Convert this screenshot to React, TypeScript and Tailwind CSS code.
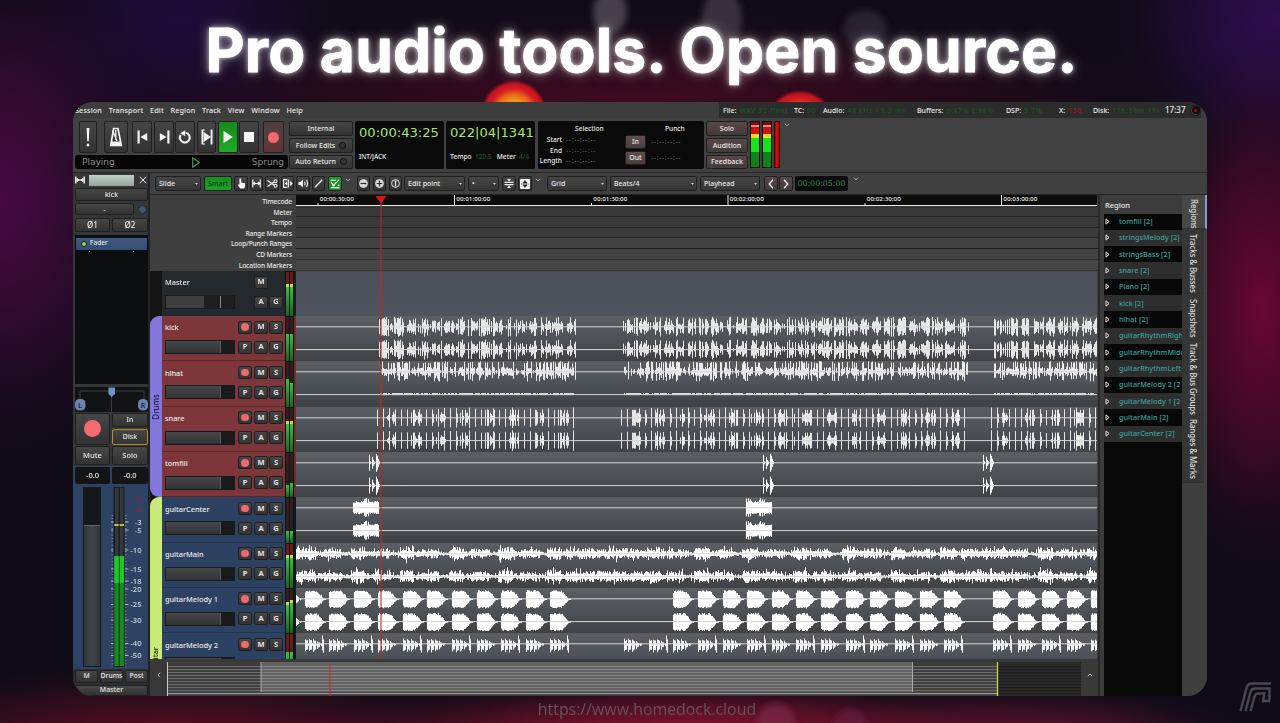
import React from "react";
import { clsx } from "clsx";
import { twMerge } from "tailwind-merge";

/* ---------- waveform generation ---------- */

const LANE_X = 296;
const LANE_W = 801;
const TOP = 10.8;
const BOTTOM = 33.6;

function rng(seed: number) {
  let s = seed;
  return () => {
    s = (s * 1664525 + 1013904223) % 4294967296;
    return s / 4294967296;
  };
}

type Seg = [number, number];
const DRUM_SEGS: Seg[] = [[379, 576], [623, 969], [993, 1097]];
const BAR = 24.55;

function bar(x: number, cy: number, up: number, down: number) {
  const px = Math.floor(x - LANE_X) + 0.5;
  return `M${px} ${(cy - up).toFixed(1)}V${(cy + down).toFixed(1)}`;
}

function kickPath(cy: number) {
  const r = rng(11);
  let d = "";
  for (const [a, b] of DRUM_SEGS) {
    for (let x = a; x < b; x += 1) {
      const v = r();
      const phase = ((x - a) % (BAR / 2)) / (BAR / 2);
      const dense = phase > 0.25 ? 0.85 : 0.4;
      const tall = v < 0.4;
      const up = tall ? 7 + r() * 3 : 1.5 + r() * 5;
      const down = tall ? 6 + r() * 4 : 1.5 + r() * 5;
      const on = r() < dense;
      if (x < a + 4 ? v < 0.5 : on) d += bar(x, cy, up, down);
    }
  }
  return d;
}

function hihatPath(cy: number) {
  const r = rng(5);
  let d = "";
  for (const [a, b] of DRUM_SEGS) {
    for (let x = a + 1; x < b; x += 1) {
      const tall = r() < 0.38;
      const up = tall ? 8 + r() * 2.4 : 1 + r() * 4;
      const down = tall ? 3 + r() * 7 : 1 + r() * 3.5;
      if (r() < 0.85) d += bar(x, cy, up, down);
    }
  }
  return d;
}

function hihatLow(cy: number) {
  const r = rng(9);
  let d = "";
  for (const [a, b] of DRUM_SEGS) {
    for (let x = a + 1; x < b; x += 1) if (r() < 0.75) d += bar(x, cy, 1.5, 0.5);
  }
  return d;
}

function snarePath(cy: number) {
  const r = rng(23);
  let d = "";
  for (const [a, b] of DRUM_SEGS) {
    for (let x = a - 2; x < b; x += BAR / 4) {
      const h = 7.5 + r() * 3;
      d += bar(x, cy, h, h);
      if (r() < 0.3) d += bar(x + 1.2, cy, 4, 5);
    }
    for (let x = a + 8; x < b; x += BAR) {
      for (let k = 0; k < 10; k++) {
        const h = r() < 0.2 ? 8 : 1.5 + r() * 4.5;
        if (x + k < b && r() < 0.8) d += bar(x + k, cy, h, h);
      }
    }
  }
  return d;
}

function tomPath(cy: number) {
  let d = "";
  for (const x of [369, 763, 983]) {
    const hits: [number, number][] = [[0, 8], [1, 1.5], [3, 6], [4, 3], [5, 1.5], [7, 9], [8, 7], [9, 4], [10, 1.5]];
    for (const [dx, h] of hits) d += bar(x + dx, cy, h, h);
  }
  return d;
}

function centerPath(cy: number) {
  const r = rng(31);
  let d = "";
  for (const x0 of [353, 746]) {
    for (let x = x0; x < x0 + 26; x += 1) {
      const spike = r() < 0.18 ? 3 : 0;
      d += bar(x, cy, 5 + r() * 2 + spike, 4.5 + r() * 2 + spike);
    }
  }
  return d;
}

function mainPath(cy: number, seed: number) {
  const r = rng(seed);
  let d = "";
  for (let x = LANE_X; x < LANE_X + LANE_W; x += 1) {
    const p = ((x - 301) % (BAR * 2)) / (BAR * 2);
    const busy = (x > 565 && x < 650) || (x > 960 && x < 1010);
    const swell = p < 0.3 ? 6 : p < 0.45 ? 3 : p < 0.8 ? 4.6 : 2;
    const env = busy ? 5 : swell;
    const spike = r() < 0.12 ? 2.5 : 0;
    d += bar(x, cy, env * (0.35 + r() * 0.85) + spike, env * (0.35 + r() * 0.75) + spike * r() * 1.3);
  }
  return d;
}

const melodyStarts: number[] = [
  ...Array.from({ length: 11 }, (_, i) => 305.2 + i * BAR),
  ...Array.from({ length: 12 }, (_, i) => 673.8 + i * 24.62),
  ...Array.from({ length: 5 }, (_, i) => 993.7 + i * 24.5),
];

function melodyOne(cy: number, seed: number) {
  const r = rng(seed);
  let d = bar(296.5, cy, 4, 4) + bar(297.5, cy, 3, 3) + bar(298.5, cy, 2, 2) + bar(300, cy, 1, 1);
  for (const s of melodyStarts) {
    for (let t = 0; t < 21; t += 1) {
      const env = t < 1 ? 6.5 : t < 11 ? 7.6 : t < 19 ? 7.6 * (1 - (t - 11) / 8.5) : 0.8;
      const j = t < 17 ? r() * 2 : 0;
      if (s + t < 1097) d += bar(s + t, cy, env + j - 0.4, env + j * 0.8);
    }
  }
  return d;
}

function melodyTwo(cy: number) {
  const r = rng(77);
  let d = "";
  const starts = [...melodyStarts, 624.6, 649.2];
  starts.forEach((s) => {
    const accent = Math.round((s - 305) / BAR) % 2 === 0;
    for (let t = 0; t < 18; t += 1) {
      const env = Math.max(1.2, 6.6 - (t > 9 ? (t - 9) * 0.75 : 0));
      const m = t % 4;
      const k = m === 3 ? 0.2 : m === 0 ? 1 : 0.75;
      if (s + t < 1097) d += bar(s + t, cy, env * k * (0.7 + r() * 0.2), env * k * (1 + r() * 0.25));
    }
    if (accent && s + 18 < 1097) {
      d += bar(s + 17, cy, 9, 6) + bar(s + 18, cy, 5, 8.5);
    }
  });
  return d;
}

type Wave = { d: string; w: number };
const WAVES: Record<string, Wave> = {
  kick: { d: kickPath(TOP) + kickPath(BOTTOM), w: 0.86 },
  hihat: { d: hihatPath(TOP - 0.2) + hihatLow(BOTTOM), w: 0.88 },
  snare: { d: snarePath(TOP) + snarePath(BOTTOM), w: 0.85 },
  tomfill: { d: tomPath(TOP) + tomPath(BOTTOM), w: 1 },
  guitarCenter: { d: centerPath(TOP) + centerPath(BOTTOM), w: 1.1 },
  guitarMain: { d: mainPath(TOP, 3) + mainPath(BOTTOM, 8), w: 1.05 },
  "guitarMelody 1": { d: melodyOne(TOP + 0.4, 14) + melodyOne(BOTTOM + 0.4, 19), w: 1.1 },
  "guitarMelody 2": { d: melodyTwo(TOP + 0.6), w: 0.95 },
};

/* ---------- shared pieces ---------- */

const BTN = "flex shrink-0 items-center justify-center rounded-[2px] border border-[#1f1f1f] bg-linear-to-b from-[#464646] to-[#333333]";

function Btn({ className, children }: { className?: string; children?: React.ReactNode }) {
  return <div className={twMerge(BTN, className)}>{children}</div>;
}

function Chevron({ className }: { className?: string }) {
  return (
    <svg className={clsx("shrink-0", className)} width="6" height="4" viewBox="0 0 6 4">
      <path d="M0.8 0.8L3 2.8L5.2 0.8" fill="none" stroke="#b5b5b5" strokeWidth="0.9" />
    </svg>
  );
}

function Select({ label, className }: { label: string; className?: string }) {
  return (
    <div className={clsx("flex h-[15px] shrink-0 items-center justify-between rounded-[2px] border border-[#1f1f1f] bg-linear-to-b from-[#464646] to-[#353535] pl-[3px] pr-[2px] whitespace-nowrap", className)}>
      <span>{label}</span>
      <svg width="3" height="2" viewBox="0 0 3 2"><path d="M0 0H3L1.5 2Z" fill="#ccc" /></svg>
    </div>
  );
}

/* ---------- menu + status ---------- */

function Stat({ label, value, className, red }: { label: string; value: string; className: string; red?: boolean }) {
  return (
    <div className={clsx("flex shrink-0 gap-[3px] whitespace-nowrap", className)}>
      <span>{label}</span>
      <span className={clsx("tracking-[0.55px]", red ? "text-[#a81624]" : "text-[#1b5a1f]")}>{value}</span>
    </div>
  );
}

function MenuBar() {
  return (
    <div className="flex h-4 items-center justify-between bg-[#3d3d3d]">
      <div className="flex h-full items-center gap-[6.7px] pt-px pl-[2px] text-[7.2px] tracking-[0.15px]">
        {["Session", "Transport", "Edit", "Region", "Track", "View", "Window", "Help"].map((m) => (
          <span key={m}>{m}</span>
        ))}
      </div>
      <div className="mr-[6px] flex h-full items-center bg-[#2c2c2c] pl-1">
        <Stat label="File:" value="WAV 32-float" className="w-[71px]" />
        <Stat label="TC:" value="30" className="w-[29px]" />
        <Stat label="Audio:" value="48 kHz /  5.3 ms" className="w-[94px]" />
        <Stat label="Buffers:" value="p:47% c:98%" className="w-[89px]" />
        <Stat label="DSP:" value=" 5.7%" className="w-[53px]" />
        <Stat label="X:" value="150" red className="w-[34px]" />
        <Stat label="Disk:" value="11h:58m:15s" className="w-[72px]" />
        <span className="w-[25px] text-[8px]">17:37</span>
        <div className="flex size-[11px] items-center justify-center rounded-full border border-[#1c1c1c] bg-[#4a3a3e]">
          <div className="flex size-[8px] items-center justify-center rounded-full bg-[#150a0c]"><div className="size-[3px] rounded-full bg-[#a01024]" /></div>
        </div>
      </div>
    </div>
  );
}

/* ---------- transport ---------- */

const W = "#f4f4f4";

function Transport() {
  return (
    <div className="flex h-[54px] items-start bg-[#414141] pl-[2px] pt-[3px]">
      <div className="flex w-[213px] shrink-0 flex-col">
        <div className="flex h-[32px]">
          <Btn className="ml-[4px] h-[32px] w-[18px]">
            <svg width="6" height="20" viewBox="0 0 6 20"><path d="M1.6 1H4.4L3.8 14H2.2Z" fill={W} /><circle cx="3" cy="18" r="1.4" fill={W} /></svg>
          </Btn>
          <Btn className="ml-[7px] h-[32px] w-[24px]">
            <svg width="14" height="20" viewBox="0 0 14 20" fill="none" stroke={W}>
              <path d="M4.6 1.5H9L12.3 18.5H1.7Z" strokeWidth="1.7" /><path d="M2.5 14.5H11.5V18H2.5Z" fill={W} stroke="none" /><path d="M8 14L3.6 3.4M6.8 3V13" strokeWidth="1.3" />
            </svg>
          </Btn>
          <Btn className="ml-[4px] h-[32px] w-[20px]">
            <svg width="11" height="14" viewBox="0 0 11 14"><path d="M0.5 0.5H2.7V13.5H0.5ZM10.2 3V11L3.4 7Z" fill={W} /></svg>
          </Btn>
          <Btn className="ml-[2px] h-[32px] w-[20px]">
            <svg width="11" height="14" viewBox="0 0 11 14"><path d="M8.3 0.5H10.5V13.5H8.3ZM0.8 3V11L7.6 7Z" fill={W} /></svg>
          </Btn>
          <Btn className="ml-[1px] h-[32px] w-[20px]">
            <svg width="14" height="14" viewBox="0 0 14 14"><path d="M2.600 5A4.900 4.900 0 1 0 7.600 2.700" fill="none" stroke={W} strokeWidth="2.1" /><path d="M2.200 3.300L7.200 0.200V6.200Z" fill={W} /></svg>
          </Btn>
          <Btn className="ml-[2px] h-[32px] w-[19px]">
            <svg width="12" height="16" viewBox="0 0 12 16"><path d="M0.5 0.5H2.2V15.500H0.5ZM9.6 0.5H11.5V15.500H9.6ZM2.6 2.800L9.8 8L2.6 13.200Z" fill={W} /><path d="M2 1H4M2 15H4" stroke={W} strokeWidth="1" /></svg>
          </Btn>
          <Btn className="ml-[2px] h-[32px] w-[20px] from-[#158a1a] to-[#1faa27]">
            <svg width="10" height="14" viewBox="0 0 10 14"><path d="M0.5 0.8L9.7 7L0.5 13.2Z" fill={W} /></svg>
          </Btn>
          <Btn className="ml-[1px] h-[32px] w-[20px]"><div className="size-[10px] bg-[#f4f4f4]" /></Btn>
          <Btn className="ml-[4px] h-[32px] w-[21px] from-[#4d4041] to-[#633538]"><div className="size-[11px] rounded-full bg-[#f5686d]" /></Btn>
        </div>
        <div className='mt-[2px] flex h-[14px] items-center justify-between rounded-[3px] bg-[#060606] pt-px px-[7px] font-["DejaVu_Sans",sans-serif] text-[9px] text-[#8a8a8a]'>
          <span>Playing</span>
          <svg className="ml-[25px]" width="8" height="11" viewBox="0 0 8 11"><path d="M0.7 0.8L7.2 5.5L0.7 10.2Z" fill="none" stroke="#3e9a57" strokeWidth="1.2" /></svg>
          <span className="-mr-[3px]">Sprung</span>
        </div>
      </div>
      <div className="ml-[1px] flex w-[64px] shrink-0 flex-col gap-[2px]">
        <Btn className="h-[15px]">Internal</Btn>
        <Btn className="h-[14.5px] gap-[4px] whitespace-nowrap"><span>Follow Edits</span><Led /></Btn>
        <Btn className="h-[14.5px] gap-[4px] whitespace-nowrap"><span>Auto Return</span><Led /></Btn>
      </div>
      <div className="ml-[2px] flex h-[48px] w-[89px] shrink-0 flex-col rounded-[2px] bg-[#0a0a0a] px-[4px]">
        <span className='mt-[3px] h-[18px] font-["DejaVu_Sans",sans-serif] text-[13.1px] leading-[18px] text-[#a5e86c]'>00:00:43:25</span>
        <span className="mt-[10px] text-[6.5px] leading-[9px] tracking-[-0.1px]">INT/JACK</span>
      </div>
      <div className="ml-[2px] flex h-[48px] w-[89px] shrink-0 flex-col rounded-[2px] bg-[#0a0a0a] pl-[4px]">
        <span className='mt-[3px] h-[18px] font-["DejaVu_Sans",sans-serif] text-[13.1px] leading-[18px] text-[#a5e86c]'>022|04|1341</span>
        <div className="mt-[10px] flex gap-[3px] text-[6.7px] leading-[9px] whitespace-nowrap">
          <span>Tempo</span><span className="w-[19px] text-[#1e5536]">120.5</span><span>Meter</span><span className="text-[#1e5536]">4/4</span>
        </div>
      </div>
      <div className="ml-[3px] flex h-[48px] w-[166px] shrink-0 rounded-[2px] bg-[#0a0a0a] text-[6.6px]">
        <div className="grid w-[83px] grid-cols-[24px_1fr] grid-rows-[14px_10.5px_10.5px_11px] gap-x-[4px] leading-[10px]">
          <span className="col-span-2 pl-[37px] leading-[15px]">Selection</span>
          <span className="text-right">Start</span><Dashes />
          <span className="text-right">End</span><Dashes />
          <span className="text-right">Length</span><Dashes />
        </div>
        <div className="ml-[4px] flex w-[22px] flex-col gap-[2px] pt-[13.5px] text-[7px]">
          <Btn className="h-[14px] w-[21px] from-[#604e4e] to-[#4b3d3e]">In</Btn>
          <Btn className="h-[14px] w-[21px] from-[#604e4e] to-[#4b3d3e]">Out</Btn>
        </div>
        <div className="ml-[4px] flex flex-col">
          <span className="pl-[14px] leading-[15px]">Punch</span>
          <span className="leading-[12px]"><Dashes /></span>
          <span className="mt-[4px] leading-[12px]"><Dashes /></span>
        </div>
      </div>
      <div className="ml-[2px] flex w-[42px] shrink-0 flex-col gap-[2px]">
        <Btn className="h-[15px] from-[#584848] to-[#443a3a]">Solo</Btn>
        <Btn className="h-[14.5px] from-[#584848] to-[#443a3a]">Audition</Btn>
        <Btn className="h-[14.5px] from-[#584848] to-[#443a3a]">Feedback</Btn>
      </div>
      <div className="ml-[2px] flex h-[47px] gap-[1.5px]">
        <MasterMeter /><MasterMeter />
        <div className="ml-[1px] w-[6px] border border-[#3a0505] bg-linear-to-r from-[#8c0808] via-[#e31212] to-[#8c0808]" />
      </div>
      <Chevron className="ml-[4px] mt-[2px]" />
    </div>
  );
}

function Led() {
  return <div className="size-[7px] rounded-full border-[1.5px] border-[#0c0c0c] bg-[#363636]" />;
}

function Dashes() {
  return <span className="tracking-[0.7px] text-[#5a6a5e]">--:--:--:--</span>;
}

function MasterMeter() {
  return (
    <div className="flex h-full w-[10px] flex-col border border-[#101010]">
      <div className="h-[3px] bg-[#7a0c0c]" />
      <div className="h-[2px] bg-[#e08a8a]" />
      <div className="h-[7px] bg-[#cf1111]" />
      <div className="h-[4px] bg-[#eedb20]" />
      <div className="h-[14px] bg-[#15e51b]" />
      <div className="flex-1 bg-[#11801b]" />
    </div>
  );
}

/* ---------- tool row ---------- */

function ToolRow() {
  const s = { fill: "none", stroke: W, strokeWidth: 1.1 };
  return (
    <div className="flex h-[22px] items-start border-t border-[#262626] bg-[#404040] pt-[3px] pl-[5px]">
      <Select label="Slide" className="w-[46px]" />
      <Btn className="ml-[3px] h-[15px] w-[28px] from-[#1a8f22] to-[#1aa026] text-[#0a3f0d]">Smart</Btn>
      <Btn className="ml-[2px] h-[15px] w-[14px]">
        <svg width="9" height="11" viewBox="0 0 9 11"><path d="M2.4 0.5H4.2V4.4L8 5.2V9L7 10.6H3.2L0.6 6.8L2.4 6.6Z" fill={W} /></svg>
      </Btn>
      <Btn className="ml-[2px] h-[15px] w-[13px]">
        <svg width="9" height="9" viewBox="0 0 9 9"><path d="M0.7 0.5V8.5M8.3 0.5V8.5M1 4.5H8M3 2.8L1.4 4.5L3 6.2M6 2.8L7.6 4.5L6 6.2" {...s} /></svg>
      </Btn>
      <Btn className="ml-[2px] h-[15px] w-[14px]">
        <svg width="11" height="9" viewBox="0 0 11 9"><path d="M0.5 1.5L7 6M0.5 7.5L7 3" {...s} strokeWidth="1.4" /><circle cx="8.5" cy="2.2" r="1.5" {...s} /><circle cx="8.5" cy="6.8" r="1.5" {...s} /></svg>
      </Btn>
      <Btn className="ml-[2px] h-[15px] w-[13px]">
        <svg width="10" height="9" viewBox="0 0 10 9"><path d="M4.4 0.6H0.6V8.4H4.4" {...s} /><path d="M1.8 4.5L4.2 2.2V6.8ZM4.8 0.5H6V8.5H4.8ZM7 1.8L9.8 4.5L7 7.2Z" fill={W} /></svg>
      </Btn>
      <Btn className="ml-[2px] h-[15px] w-[14px]">
        <svg width="11" height="9" viewBox="0 0 11 9"><path d="M0.5 3H2.4L5 0.6V8.4L2.4 6H0.5Z" fill={W} /><path d="M6.5 2.6Q7.6 4.5 6.5 6.4M8.5 1Q10.6 4.5 8.5 8" {...s} /></svg>
      </Btn>
      <Btn className="ml-[2px] h-[15px] w-[13px]">
        <svg width="9" height="9" viewBox="0 0 9 9"><path d="M0.800 8.400L2 6.200L3 7.100Z" fill={W} stroke={W} strokeWidth="0.6" /><path d="M2.400 6.700L8.300 0.700" stroke={W} strokeWidth="1.3" /></svg>
      </Btn>
      <Btn className="ml-[3px] h-[15px] w-[14px] from-[#1d9a28] to-[#1a8b24]">
        <svg width="10" height="10" viewBox="0 0 10 10"><path d="M0.5 1.2H6M0.7 8.6H9.3M1 3L3.4 6.4L9 0.8" {...s} /><circle cx="3.4" cy="6.4" r="1.2" fill={W} /><circle cx="8.6" cy="6.3" r="0.9" fill={W} /></svg>
      </Btn>
      <Chevron className="ml-[3px] mt-[2px]" />
      {[0, 1, 2].map((i) => (
        <Btn key={i} className={i === 0 ? "ml-[6px] h-[15px] w-[13px]" : "ml-[3px] h-[15px] w-[13px]"}>
          <svg width="9" height="9" viewBox="0 0 9 9">
            <circle cx="4.5" cy="4.5" r="3.9" fill={i === 2 ? "none" : "#d9d9d9"} stroke="#d9d9d9" />
            <path d={i === 0 ? "M1.6 4.5H7.4" : i === 1 ? "M1.8 4.5H7.2M4.5 1.8V7.2" : "M4.5 2V7M3.6 2.2H5.4M3.6 6.8H5.4"} stroke={i === 2 ? "#e5e5e5" : "#2c2c2c"} strokeWidth="1.2" />
          </svg>
        </Btn>
      ))}
      <Select label="Edit point" className="ml-[2px] w-[61px]" />
      <Select label="•" className="ml-[3px] w-[31px]" />
      <Btn className="ml-[3px] h-[15px] w-[14px]">
        <svg width="10" height="11" viewBox="0 0 10 11"><path d="M0.5 4.4H9.5M0.5 6.6H9.5" {...s} /><path d="M3 1L5 3.4L7 1ZM3 10L5 7.6L7 10Z" fill={W} /></svg>
      </Btn>
      <Btn className="ml-[2px] h-[15px] w-[14px]">
        <svg width="10" height="10" viewBox="0 0 10 10"><rect width="10" height="10" rx="1" fill={W} /><path d="M1 5H9M3 4L5 1.4L7 4ZM3 6L5 8.6L7 6Z" fill="#222" stroke="#222" strokeWidth="0.6" /></svg>
      </Btn>
      <Chevron className="ml-[3px] mt-[2px]" />
      <Select label="Grid" className="ml-[6px] w-[60px]" />
      <Select label="Beats/4" className="ml-[3px] w-[87px]" />
      <Select label="Playhead" className="ml-[3px] w-[60px]" />
      <Btn className="ml-[4px] h-[15px] w-[14px] from-[#584848] to-[#443a3a]">
        <svg width="6" height="10" viewBox="0 0 6 10"><path d="M5 0.8L1.2 5L5 9.2" {...s} strokeWidth="1.3" /></svg>
      </Btn>
      <Btn className="ml-[1px] h-[15px] w-[14px] from-[#584848] to-[#443a3a]">
        <svg width="6" height="10" viewBox="0 0 6 10"><path d="M1 0.8L4.8 5L1 9.2" {...s} strokeWidth="1.3" /></svg>
      </Btn>
      <div className='ml-[2px] flex h-[15px] w-[53px] items-center justify-center rounded-[2px] bg-[#0b0b0b] font-["DejaVu_Sans",sans-serif] text-[7.9px] text-[#2f8a45]'>00:00:05:00</div>
      <Chevron className="ml-[5px] mt-[1px]" />
    </div>
  );
}

/* ---------- mixer strip ---------- */

function MeterScale() {
  const marks: [string, number, boolean][] = [
    ["+3", 500, true], ["+0", 511, true], ["-3", 523, false], ["-5", 531, false], ["-10", 551, false], ["-15", 570, false],
    ["-18", 582, false], ["-20", 590, false], ["-25", 605.5, false], ["-30", 621, false], ["-40", 644.5, false], ["-50", 656.5, false],
  ];
  return (
    <svg className="ml-[7px] shrink-0" width="40" height="182" viewBox="0 0 40 182" fontFamily='"Noto Sans", sans-serif' fontSize="7.6">
      <rect x="5.5" y="0" width="11" height="180" fill="#17191b" />
      <rect x="7" y="1" width="3.6" height="178" fill="#33383a" />
      <rect x="11.8" y="1" width="3.6" height="178" fill="#33383a" />
      <rect x="6.3" y="69" width="4.4" height="110" fill="#168a20" />
      <rect x="11.6" y="69" width="4.4" height="110" fill="#168a20" />
      <rect x="6.3" y="69" width="4.4" height="27" fill="#22c52c" />
      <rect x="11.6" y="69" width="4.4" height="27" fill="#22c52c" />
      <path d="M6.3 38H10.7M11.6 38H16" stroke="#f0e838" strokeWidth="1.4" />
      <path d="M4.3 28V180M17.8 28V180" stroke="#aab4c2" strokeWidth="1.6" strokeDasharray="0.7 2.6" opacity="0.7" />
      {marks.map(([t, y, red]) => (
        <g key={t}>
          {!red && <path d={`M3 ${y - 488}H5.500M17 ${y - 488}H20.500`} stroke="#d0d6dd" strokeWidth="0.8" />}
          <text x="33.5" y={y - 488 + 2.7} textAnchor="end" fill={red ? "#8e2634" : "#d5dae0"}>{t}</text>
        </g>
      ))}
    </svg>
  );
}

function MixerStrip() {
  return (
    <div className="flex w-[77px] shrink-0 flex-col border-r-2 border-t border-r-[#232323] border-t-[#262626] bg-[#343638] pl-[2px]">
      <div className="flex h-[15px] items-center">
        <svg width="10" height="8" viewBox="0 0 10 8"><path d="M0.8 0.5V7.5M9.2 0.5V7.5" stroke={W} strokeWidth="1.4" /><path d="M4.6 4L1.6 1.6V6.4ZM5.4 4L8.4 1.6V6.4Z" fill={W} /><path d="M2 4H8" stroke={W} /></svg>
        <div className="ml-[4px] h-[11px] w-[45px] bg-linear-to-b from-[#bed0c8] to-[#93a59d]" />
        <svg className="ml-[5px]" width="8" height="8" viewBox="0 0 8 8"><path d="M0.8 0.8L7.2 7.2M7.2 0.8L0.8 7.2" stroke="#e8e8e8" strokeWidth="1" /></svg>
      </div>
      <Btn className="h-[13px] w-[73px]">kick</Btn>
      <div className="mt-[2px] flex h-[13px] items-center">
        <Btn className="h-[12px] w-[59px]">-</Btn>
        <div className="ml-[4px] size-[9px] rounded-full border border-[#20262e] bg-[#45566f]" />
      </div>
      <div className="mt-[2px] flex gap-[2px] text-[8px]">
        <Btn className="h-[14px] w-[35px]">Ø1</Btn>
        <Btn className="h-[14px] w-[36px]">Ø2</Btn>
      </div>
      <div className="mt-[3px] h-[152px] w-[73px] bg-[#0d0e0f] pt-[3px]">
        <div className="mx-px flex h-[12px] items-center gap-[3px] rounded-[1px] bg-linear-to-b from-[#41597c] to-[#344d76] pl-[5px] text-[6.500px]">
          <div className="size-[6px] rounded-full border-[1.5px] border-[#14200f] bg-[#9fd464]" />
          <span>Fader</span>
        </div>
        <div className="mt-px flex justify-between px-[14px]"><i className="size-[1px] bg-[#ccc]" /><i className="size-[1px] bg-[#ccc]" /></div>
      </div>
      <svg className="mt-[2.5px] shrink-0" width="73" height="26" viewBox="0 0 73 26" fontFamily='"Noto Sans", sans-serif' fontSize="7.5">
        <rect width="73" height="25" fill="#111315" />
        <path d="M5 13V4H36M69 13V4H37" fill="none" stroke="#3a3f45" />
        <path d="M36.5 4V25" stroke="#333a42" />
        <path d="M33.5 0.500H40V7L36.700 10L33.500 7Z" fill="#6f93bd" />
        <rect x="0" y="12" width="10.5" height="11.500" rx="4.500" fill="#6c84ad" /><rect x="63" y="12" width="10" height="11.500" rx="4.500" fill="#6c84ad" />
        <text x="3" y="20.6" fill="#15203a">L</text><text x="65.6" y="20.6" fill="#15203a">R</text>
      </svg>
      <div className="flex gap-[2px]">
        <Btn className="h-[32px] w-[35px]"><div className="size-[17px] rounded-full bg-[#f46b70]" /></Btn>
        <div className="flex flex-col gap-[2px]">
          <Btn className="h-[14px] w-[36px]">In</Btn>
          <Btn className="h-[16px] w-[36px] border-[#b98925]">Disk</Btn>
        </div>
      </div>
      <div className="mt-[1px] flex gap-[2px]">
        <Btn className="h-[19px] w-[35px] text-[7.5px]">Mute</Btn>
        <Btn className="h-[19px] w-[36px] text-[7.5px]">Solo</Btn>
      </div>
      <div className="-ml-[2px] mt-[1px] flex flex-1 flex-col bg-[#2e4263] pl-[2px]">
        <div className="mt-[1px] flex gap-[2px] text-[7.5px]">
          <div className="flex h-[17px] w-[35px] items-center justify-center rounded-[2px] bg-[#121416]">-0.0</div>
          <div className="flex h-[17px] w-[36px] items-center justify-center rounded-[2px] bg-[#121416]">-0.0</div>
        </div>
        <div className="mt-[3px] flex h-[182px] shrink-0">
          <div className="ml-[8px] flex h-[180px] w-[18px] shrink-0 flex-col border border-[#15181c] bg-[#15181a]">
            <div className="h-[37px]" />
            <div className="flex-1 border-t border-[#666] bg-linear-to-r from-[#30363a] via-[#3f4548] to-[#30363a]" />
          </div>
          <MeterScale />
        </div>
        <div className="-ml-[2px] flex flex-1 flex-col bg-[#2c2f33] pl-[2px]">
          <div className="mt-[1px] flex gap-[2px] text-[6.8px]">
            <Btn className="h-[13px] w-[23px]">M</Btn><Btn className="h-[13px] w-[23px]">Drums</Btn><Btn className="h-[13px] w-[23px]">Post</Btn>
          </div>
          <Btn className="mt-[2px] h-[11px] w-[73px] pb-px">Master</Btn>
        </div>
      </div>
    </div>
  );
}

/* ---------- rulers ---------- */

const MARKS: [string, number, boolean][] = [
  ["00:00:30:00", 318, false], ["00:01:00:00", 454.5, true], ["00:01:30:00", 591.5, false],
  ["00:02:00:00", 728, true], ["00:02:30:00", 865, false], ["00:03:00:00", 1001.5, true],
];

function Rulers() {
  const names = ["Timecode", "Meter", "Tempo", "Range Markers", "Loop/Punch Ranges", "CD Markers", "Location Markers"];
  return (
    <div className="flex h-[76px] shrink-0">
      <div className="flex w-[146px] shrink-0 flex-col bg-[#3f3f3f] pr-[4px] text-right text-[6.6px] tracking-[-0.1px]">
        {names.map((n) => <span key={n} className="h-[10.6px] leading-[13px]">{n}</span>)}
      </div>
      <div className="flex flex-1 flex-col">
        <svg className="shrink-0" width="801" height="11" viewBox="0 0 801 11" fontFamily='"Noto Sans", sans-serif' fontSize="5.9">
          <rect width="801" height="11" fill="#0d0d0d" />
          <path d="M0 10.5H801" stroke="#eee" />
          {MARKS.map(([t, x, tall]) => (
            <g key={t}>
              <path d={`M${x - 296} ${tall ? 0 : 8}V11`} stroke="#eee" />
              <text x={x - 294.2} y="6.2" fill="#eaeaea" textLength="34" lengthAdjust="spacingAndGlyphs">{t}</text>
            </g>
          ))}
        </svg>
        <div className="h-[11px] border-b border-[#222] bg-[#373737]" />
        <div className="h-[11px] border-b border-[#222] bg-[#393939]" />
        <div className="h-[10px] border-b border-[#222] bg-[#3b3b3b]" />
        <div className="h-[11px] border-b border-[#1c1c1c] bg-[#424242]" />
        <div className="h-[11px] border-b border-[#303030] bg-[#444444]" />
        <div className="h-[11px] border-b border-[#303030] bg-[#464646]" />
      </div>
    </div>
  );
}

/* ---------- tracks ---------- */

type Track = { name: string; kind: "drum" | "guitar"; levels: [number, number]; yellow?: boolean; hot?: boolean; partial?: boolean };
const TRACKS: Track[] = [
  { name: "kick", kind: "drum", levels: [27, 27] },
  { name: "hihat", kind: "drum", levels: [28, 24] },
  { name: "snare", kind: "drum", levels: [28, 28], yellow: true },
  { name: "tomfill", kind: "drum", levels: [12, 14] },
  { name: "guitarCenter", kind: "guitar", levels: [12, 12] },
  { name: "guitarMain", kind: "guitar", levels: [30, 30], yellow: true, hot: true },
  { name: "guitarMelody 1", kind: "guitar", levels: [28, 30], yellow: true },
  { name: "guitarMelody 2", kind: "guitar", levels: [27, 27], hot: true, partial: true },
];

const SMALL = "h-[13px] w-[14px] text-[7.5px] font-bold text-[#e4e4e4]";

function MiniMeter({ levels, yellow, hot, className }: { levels: [number, number]; yellow?: boolean; hot?: boolean; className?: string }) {
  return (
    <div className={clsx("flex w-[11px] shrink-0 gap-px bg-[#101211] px-[1px] pt-[1px]", className)}>
      {levels.map((l, i) => (
        <div key={i} className={clsx("flex w-[3.5px] flex-col justify-end", hot ? "bg-linear-to-b from-[#7a1515] to-[#1b1e1c]" : "bg-linear-to-b from-[#3c1c1f] to-[#1b211d]")}>
          {yellow && <div className="h-[3px] bg-[#d9d049]" />}
          <div className="bg-linear-to-b from-[#35c441] to-[#16641e]" style={{ height: l }} />
        </div>
      ))}
    </div>
  );
}

function Lane({ name }: { name: string }) {
  const w = WAVES[name];
  return (
    <div className="h-full w-[801px] shrink-0 overflow-hidden bg-linear-to-b from-[#5b5f64] via-[#4d5258] to-[#3e4246]">
      <svg width="801" height="45" viewBox="0 0 801 45">
        <path d={w.d} stroke="#ffffff" strokeWidth={w.w} fill="none" />
        <path d={`M0 ${TOP}H801`} stroke="#d4d6d8" strokeWidth="1" />
        {name !== "guitarMelody 2" && <path d={`M0 ${BOTTOM}H801`} stroke="#d4d6d8" strokeWidth="1" />}
      </svg>
    </div>
  );
}

function TrackRow({ t }: { t: Track }) {
  const drum = t.kind === "drum";
  return (
    <div className="flex h-[45.33px] shrink-0">
      <div className={clsx("flex w-[123px] shrink-0 flex-col border-b pl-[3px] pt-[3.5px]", drum ? "border-[#5e2527] bg-[#7d373a]" : "border-[#22324c] bg-[#2d4163]")}>
        <div className="flex h-[15px] items-center">
          <span className="w-[73px] pt-[2px] text-[7.4px] tracking-[-0.05px] whitespace-nowrap">{t.name}</span>
          <Btn className={SMALL}><div className="size-[7.5px] rounded-full bg-[#ef6a6e]" /></Btn>
          <Btn className={clsx(SMALL, "ml-[2px]")}>M</Btn>
          <Btn className={clsx(SMALL, "ml-[1px]")}>S</Btn>
        </div>
        <div className="mt-[5.5px] flex items-center">
          <div className="flex h-[14px] w-[70px] shrink-0 border border-[#17191b] bg-[#191a1b]">
            <div className="w-[55px] border-r border-[#5a5a5a] bg-linear-to-b from-[#454749] to-[#313335]" />
          </div>
          {!t.partial && (
            <>
              <Btn className={clsx(SMALL, "ml-[3px]")}>P</Btn>
              <Btn className={clsx(SMALL, "ml-[2px]")}>A</Btn>
              <Btn className={clsx(SMALL, "ml-[1px]")}>G</Btn>
            </>
          )}
        </div>
      </div>
      <MiniMeter levels={t.levels} yellow={t.yellow} hot={t.hot} className={drum ? "border-r-2 border-r-[#742c2f]" : "border-r-2 border-r-[#101820]"} />
      <Lane name={t.name} />
    </div>
  );
}

function Tracks() {
  return (
    <div className="flex h-[388px] shrink-0 overflow-hidden">
      <div className="flex w-[12px] shrink-0 flex-col bg-[#141414] pt-[45px]">
        <div className="flex h-[181px] shrink-0 items-center justify-center rounded-l-[9px] bg-[#8477dc] text-[8px] text-[#1a1650]">
          <span className="rotate-180 [writing-mode:vertical-rl]">Drums</span>
        </div>
        <div className="flex flex-1 items-end justify-center rounded-tl-[9px] bg-[#c9ea76] text-[7.5px] text-[#20300c]">
          <span className="rotate-180 [writing-mode:vertical-rl]">itar</span>
        </div>
      </div>
      <div className="flex flex-col">
        <div className="flex h-[45px] shrink-0">
          <div className="flex w-[123px] shrink-0 flex-col bg-[#24292d] pl-[3px] pt-[3.5px]">
            <div className="flex h-[15px] items-center">
              <span className="w-[89px] pt-[2px] text-[7.4px]">Master</span>
              <Btn className={SMALL}>M</Btn>
            </div>
            <div className="mt-[5.5px] flex items-center">
              <div className="flex h-[14px] w-[70px] shrink-0 border border-[#17191b] bg-[#1d1f20]">
                <div className="w-[38px] bg-[#3d3f41]" />
                <div className="ml-[16px] w-px bg-[#8a8a8a]" />
              </div>
              <Btn className={clsx(SMALL, "ml-[19px]")}>A</Btn>
              <Btn className={clsx(SMALL, "ml-[1px]")}>G</Btn>
            </div>
          </div>
          <MiniMeter levels={[29, 29]} yellow hot className="border-r-2 border-r-[#1a1f22]" />
          <div className="w-[801px] bg-linear-to-b from-[#4a4f5a] to-[#50545e]" />
        </div>
        {TRACKS.map((t) => <TrackRow key={t.name} t={t} />)}
      </div>
    </div>
  );
}

function Summary() {
  return (
    <div className="flex flex-1 bg-[#393939] pt-[3px]">
      <div className="flex w-[17px] shrink-0 items-center justify-center pb-[9px]">
        <svg width="4" height="6" viewBox="0 0 4 6"><path d="M3.2 0.6L1 3L3.2 5.4" fill="none" stroke="#aaa" /></svg>
      </div>
      <svg width="914" height="34" viewBox="0 0 914 34">
        <rect width="914" height="34" fill="#2b2b2b" />
        <rect width="831" height="34" fill="#3e3e3e" />
        {Array.from({ length: 10 }, (_, i) => (
          <g key={i}>
            <rect x="1" y={4 + i * 3} width="830" height="1.1" fill={i === 9 ? "#a0a0a0" : "#6c6c6c"} />
            <rect x="831" y={4 + i * 3} width="83" height="1.1" fill="#1c1c1c" />
          </g>
        ))}
        <rect x="94" y="0" width="652" height="30" fill="#c8c8c8" fillOpacity="0.26" />
        <path d="M94 0V30M745.500 0V30" stroke="#aaa" />
        <path d="M0.5 0V34" stroke="#c9c9c9" />
        <path d="M163 2V34" stroke="#c22a2a" strokeWidth="1" />
        <path d="M830.5 0V34" stroke="#c6d838" strokeWidth="1.3" />
      </svg>
      <div className="flex w-[17px] shrink-0 items-center justify-center pb-[8px]">
        <svg width="6" height="4" viewBox="0 0 6 4"><path d="M0.8 3.2L3 1L5.2 3.2" fill="none" stroke="#bbb" /></svg>
      </div>
    </div>
  );
}

/* ---------- region list ---------- */

const REGIONS = ["tomfill [2]", "stringsMelody [2]", "stringsBass [2]", "snare [2]", "Piano [2]", "kick [2]", "hihat [2]", "guitarRhythmRigh", "guitarRhythmMidd", "guitarRhythmLeft", "guitarMelody 2 [2", "guitarMelody 1 [2", "guitarMain [2]", "guitarCenter [2]"];

function RegionPanel() {
  const tabs: [string, string][] = [
    ["Regions", "h-[34px] pt-[4px]"], ["Tracks & Busses", "h-[65px] pt-[5px]"], ["Snapshots", "h-[44px] pt-[5px]"],
    ["Track & Bus Groups", "h-[77px] pt-[5px]"], ["Ranges & Marks", "h-[68px] pt-[4px]"],
  ];
  return (
    <div className="flex w-[109px] shrink-0 border-l-2 border-[#2a2a2a] bg-[#3c3c3c] pl-[4px]">
      <div className="flex w-[78px] shrink-0 flex-col">
        <div className="h-[18.5px] pt-[1px] pl-[1px] text-[7.5px] leading-[19px]">Region</div>
        {REGIONS.map((r, i) => (
          <div key={r} className={clsx("flex h-[16.33px] shrink-0 items-center gap-[9px] pl-[1px] text-[7.2px] tracking-[0.06px] whitespace-nowrap text-[#3aa599]", i % 2 ? "bg-[#2e2e2e]" : "bg-[#080808]")}>
            <svg className="shrink-0" width="5" height="7" viewBox="0 0 5 7"><path d="M1 0.9L4.1 3.5L1 6.1Z" fill="none" stroke="#e4e4e4" strokeWidth="1" /></svg>
            <span>{r}</span>
          </div>
        ))}
        <div className="flex-1 bg-[#090909]" />
      </div>
      <div className="flex flex-1 flex-col bg-[#3f3f3f]">
        {tabs.map(([t, c], i) => (
          <div key={t} className={clsx("shrink-0 border-b border-[#303030] text-[8px] leading-[12px] tracking-[-0.14px] whitespace-nowrap text-[#dcdcdc]", c, i === 0 ? "border-r-2 border-r-[#7ba4cc] bg-[#474747] pl-[6px]" : "mr-[3px] bg-[#363636] pl-[5px]")}>
            <span className="[writing-mode:vertical-rl]">{t}</span>
          </div>
        ))}
      </div>
    </div>
  );
}

/* ---------- page ---------- */

const GLOWS: [string, string, number, number, number, number, number][] = [
  ["g1", "#4a0a44", 0, 200, 170, 260, 0.95],
  ["g2", "#260c4a", 180, 20, 170, 130, 0.7],
  ["g3", "#350d5c", 1275, 20, 170, 150, 0.8],
  ["g4", "#720638", 1262, 310, 120, 260, 0.9],
  ["g5", "#440a20", 640, 100, 560, 90, 0.9],
  ["g6", "#6a0f24", 170, 735, 340, 70, 0.8],
  ["g7", "#a01434", 690, 738, 400, 62, 0.95],
  ["g8", "#6a1634", 1030, 735, 220, 50, 0.8],
];

function Backdrop() {
  return (
    <svg className="absolute inset-0" width="1280" height="723" viewBox="0 0 1280 723">
      <defs>
        {GLOWS.map(([id, color, , , , , o]) => (
          <radialGradient key={id} id={id}>
            <stop offset="0" stopColor={color} stopOpacity={o} />
            <stop offset="0.5" stopColor={color} stopOpacity={o * 0.5} />
            <stop offset="0.8" stopColor={color} stopOpacity={o * 0.12} />
            <stop offset="1" stopColor={color} stopOpacity="0" />
          </radialGradient>
        ))}
        <filter id="b3" x="-50%" y="-50%" width="200%" height="200%"><feGaussianBlur stdDeviation="3" /></filter>
        <filter id="b1" x="-50%" y="-50%" width="200%" height="200%"><feGaussianBlur stdDeviation="1.5" /></filter>
        <radialGradient id="lamp"><stop offset="0.4" stopColor="#ee9a18" /><stop offset="0.62" stopColor="#e8601c" /><stop offset="0.76" stopColor="#d81c24" /><stop offset="1" stopColor="#c2101f" /></radialGradient>
      </defs>
      <rect width="1280" height="723" fill="#100b17" />
      {GLOWS.map(([id, , cx, cy, rx, ry]) => (
        <ellipse key={id} cx={cx} cy={cy} rx={rx} ry={ry} fill={`url(#${id})`} />
      ))}
      <g filter="url(#b3)">
        <ellipse cx="610" cy="12" rx="17" ry="22" fill="#6a626e" opacity="0.6" />
        <ellipse cx="722" cy="18" rx="20" ry="28" fill="#5f5864" opacity="0.5" />
        <ellipse cx="865" cy="30" rx="22" ry="20" fill="#4a4552" opacity="0.4" />
        <circle cx="776" cy="722" r="19" fill="#7a2547" opacity="0.75" />
        <circle cx="850" cy="726" r="17" fill="#6d2245" opacity="0.6" />
      </g>
      <g filter="url(#b1)">
        <circle cx="514" cy="113" r="31" fill="url(#lamp)" />
        <circle cx="800" cy="125" r="33" fill="url(#lamp)" />
      </g>
      <g fill="none" stroke="#4a464e" strokeWidth="2.4">
        <path d="M1240.5 711L1246.500 688Q1247.500 683.500 1252 683.500H1271" />
        <path d="M1245.500 711L1250.500 692Q1251.500 688.500 1255 688.500H1269.500V700" />
        <path d="M1250.500 711L1254.500 696.500Q1255.500 693.500 1258 693.500H1264.500L1263 701H1270" />
      </g>
    </svg>
  );
}

export default function App() {
  return (
    <div className='relative flex h-[723px] w-[1280px] flex-col overflow-hidden bg-[#100b17] font-["Noto_Sans",sans-serif] text-[#ececec]'>
      <Backdrop />
      <h1 className='relative flex h-[102px] shrink-0 items-center justify-center pl-[3px] pb-[2px] font-["Inter",sans-serif] text-[60.5px] font-bold leading-[60px] tracking-[0.15px] whitespace-nowrap text-white [-webkit-text-stroke:0.8px_white] [text-shadow:0_0_5px_rgba(255,255,255,0.8),0_0_13px_rgba(255,255,255,0.5)]'>
        Pro audio tools. Open source.
      </h1>
      <div className="relative ml-[73px] flex h-[594px] w-[1134px] shrink-0 flex-col overflow-hidden rounded-[20px] bg-[#404040] text-[7px] leading-none font-medium">
        <MenuBar />
        <Transport />
        <div className="flex min-h-0 flex-1">
          <MixerStrip />
          <div className="flex min-w-0 flex-1 flex-col">
            <ToolRow />
            <div className="flex min-h-0 flex-1 border-t border-[#262626]">
              <div className="relative flex w-[948px] shrink-0 flex-col">
                <Rulers />
                <Tracks />
                <Summary />
                <svg className="absolute left-[225px] top-0" width="12" height="464" viewBox="0 0 12 464">
                  <path d="M0.500 1H11.500L6 8.500Z" fill="#e51414" />
                  <path d="M6 8V464" stroke="#c02a1e" strokeWidth="1.100" />
                </svg>
              </div>
              <RegionPanel />
            </div>
          </div>
        </div>
      </div>
      <div className='relative flex flex-1 items-center justify-center pl-[14px] font-["Open_Sans",sans-serif] text-[15.900px] text-[#64545e]'>
        https://www.homedock.cloud
      </div>
    </div>
  );
}
